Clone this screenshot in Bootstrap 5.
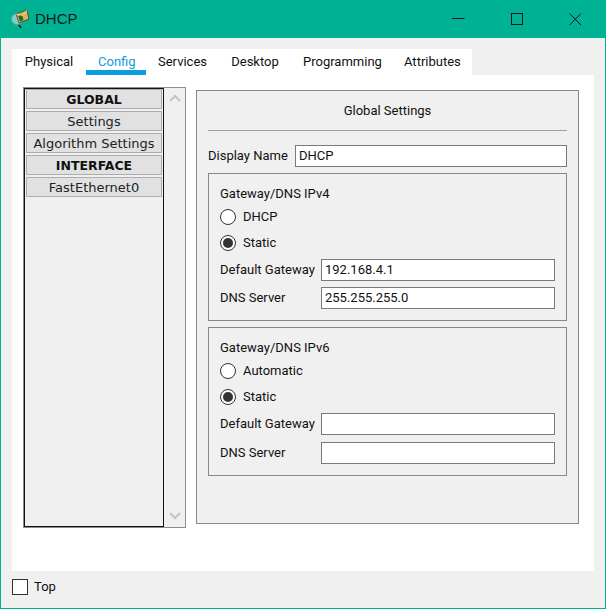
<!DOCTYPE html>
<html>
<head>
  <meta charset="utf-8"/>
  <title>DHCP</title>
  <link rel="stylesheet" href="https://cdn.jsdelivr.net/npm/bootstrap@5.3.2/dist/css/bootstrap.min.css">
  <style>
    html, body { height: 609px; overflow: hidden; }
    body { background: #fff; font-family: Roboto, "Liberation Sans", Arial, sans-serif; font-size: 13px; color: #111; }
    .pt-window { width: 606px; height: 609px; background: #f0f0f0; border: 1px solid #00b294; border-top: 0; }
    .pt-title { height: 38px; margin: 0 -1px; background: #00b294; padding-left: 10px; color: #0c1c1a; }
    .pt-title-text { font-family: "Liberation Sans", Arial, sans-serif; font-size: 15px; margin-left: 5px; }
    .pt-winbtns { width: 177px; height: 38px; padding-right: 1px; }
    .pt-winbtns span { width: 59px; text-align: center; line-height: 0; }
    .pt-main { padding: 11px 11px 0; }
    .pt-tabs { width: 460px; height: 26px; background: #fff; padding-left: 12px; }
    .pt-tab { position: relative; flex: none; margin-right: 24px; line-height: 26px; text-align: center; white-space: nowrap; }
    .pt-tab:nth-child(1) { width: 50px; }
    .pt-tab:nth-child(2) { width: 36px; }
    .pt-tab:nth-child(3) { width: 49px; }
    .pt-tab:nth-child(4) { width: 48px; }
    .pt-tab:nth-child(5) { width: 77px; }
    .pt-tab:nth-child(6) { width: 56px; margin-right: 0; }
    .pt-tab.on { color: #0f9bd8; }
    .pt-tab.on::after { content: ""; position: absolute; left: -12px; right: -12px; bottom: 0; height: 5px; background: #0a9fdc; }
    .pt-content { width: 582px; height: 496px; background: #fff; padding: 12px 11px 0; }
    .pt-side { width: 163px; height: 441px; border: 1px solid #8a8d91; background: #f0f0f0; }
    .pt-list { width: 140px; height: 439px; border: 1px solid #111; padding: 0 1px; background: #f0f0f0; }
    .pt-item { height: 20px; margin: 0 0 2px 0; background: #e1e1e1; border: 1px solid #adadad; font-family: "DejaVu Sans", Verdana, sans-serif; font-size: 13px; line-height: 20px; text-align: center; color: #222; white-space: nowrap; overflow: hidden; }
    .pt-item.head { font-weight: 700; color: #111; font-size: 12.5px; }
    .pt-scroll { width: 21px; padding: 6px 0 7px; }
    .pt-panel { width: 383px; height: 434px; margin: 3px 0 0 10px; background: #f0f0f0; border: 1px solid #85888c; padding: 0 11px; }
    .pt-heading { height: 40px; border-bottom: 1px solid #a0a0a0; padding-top: 12px; text-align: center; margin-bottom: 14px; line-height: 16px; }
    .pt-field { height: 22px; border: 1px solid #7a7a7a; background: #fff; padding: 0 3px; line-height: 20px; color: #111; }
    .pt-label { line-height: 22px; white-space: nowrap; }
    .pt-label-wide { width: 87px; }
    .pt-group { border: 1px solid #85888c; padding: 0 11px; margin-top: 6px; }
    .pt-group.v4 { height: 148px; }
    .pt-group.v6 { height: 149px; }
    .pt-group-title { margin-top: 11px; line-height: 17px; margin-bottom: 2px; }
    .pt-radio { width: 16px; height: 16px; border-radius: 50%; border: 1px solid #333; background: #fff; margin-right: 7px; flex: none; position: relative; }
    .pt-radio.on::after { content: ""; position: absolute; left: 2px; top: 2px; width: 10px; height: 10px; border-radius: 50%; background: #333; }
    .pt-radio-row { height: 26px; }
    .pt-row { margin-top: 6px; }
    .pt-radio-row + .pt-row { margin-top: 3px; }
    .v6 .pt-row:last-child { margin-top: 7px; }
    .pt-row .pt-label { width: 101px; }
    .pt-row .pt-field { width: 234px; }
    .pt-foot { padding-top: 8px; line-height: 16px; }
    .pt-check { width: 16px; height: 16px; border: 1px solid #333; background: #fff; margin-right: 6px; }
  </style>
</head>
<body>
<div class="pt-window">
  <div class="pt-title d-flex align-items-center justify-content-between">
    <div class="d-flex align-items-center">
      <svg width="20" height="20" viewBox="0 0 20 20">
        <path d="M7 13 L11 19" stroke="#222" stroke-width="1.6"/>
        <circle cx="7" cy="10" r="5.5" fill="#7fd0c4" stroke="#5da89e"/>
        <path d="M6 5 L17 1 L19 10 L9 14 Z" fill="#d9b45a" stroke="#4a3a12" stroke-width="0.8"/>
        <path d="M8 7 L12 5.5 L13.5 11 L10 12.5 Z" fill="#1d6b35"/>
        <path d="M6 5 L13 6.5 L17 1" fill="none" stroke="#f3e3a8" stroke-width="0.8"/>
      </svg>
      <span class="pt-title-text">DHCP</span>
    </div>
    <div class="pt-winbtns d-flex align-items-center">
      <span><svg width="13" height="13" viewBox="0 0 13 13"><path d="M0 5.5H12.5" stroke="#111" stroke-width="1"/></svg></span>
      <span><svg width="13" height="13" viewBox="0 0 13 13"><rect x="0.5" y="0.5" width="11" height="11" fill="none" stroke="#111"/></svg></span>
      <span><svg width="13" height="13" viewBox="0 0 13 13"><path d="M0.5 0.5L12 12M12 0.5L0.5 12" stroke="#111" stroke-width="1"/></svg></span>
    </div>
  </div>
  <div class="pt-main">
    <div class="pt-tabs d-flex">
      <span class="pt-tab">Physical</span>
      <span class="pt-tab on">Config</span>
      <span class="pt-tab">Services</span>
      <span class="pt-tab">Desktop</span>
      <span class="pt-tab">Programming</span>
      <span class="pt-tab">Attributes</span>
    </div>
    <div class="pt-content d-flex align-items-start">
      <div class="pt-side d-flex">
        <div class="pt-list">
          <div class="pt-item head">GLOBAL</div>
          <div class="pt-item">Settings</div>
          <div class="pt-item">Algorithm Settings</div>
          <div class="pt-item head">INTERFACE</div>
          <div class="pt-item">FastEthernet0</div>
        </div>
        <div class="pt-scroll d-flex flex-column justify-content-between align-items-center">
          <svg width="12" height="8" viewBox="0 0 12 8"><path d="M1 7L6 2L11 7" fill="none" stroke="#c4c4c4" stroke-width="2"/></svg>
          <svg width="12" height="8" viewBox="0 0 12 8"><path d="M1 1L6 6L11 1" fill="none" stroke="#c4c4c4" stroke-width="2"/></svg>
        </div>
      </div>
      <div class="pt-panel">
        <div class="pt-heading">Global Settings</div>
        <div class="d-flex">
          <span class="pt-label pt-label-wide">Display Name</span>
          <div class="pt-field flex-grow-1">DHCP</div>
        </div>
        <div class="pt-group v4">
          <div class="pt-group-title">Gateway/DNS IPv4</div>
          <div class="pt-radio-row d-flex align-items-center"><span class="pt-radio"></span>DHCP</div>
          <div class="pt-radio-row d-flex align-items-center"><span class="pt-radio on"></span>Static</div>
          <div class="pt-row d-flex"><span class="pt-label">Default Gateway</span><div class="pt-field">192.168.4.1</div></div>
          <div class="pt-row d-flex"><span class="pt-label">DNS Server</span><div class="pt-field">255.255.255.0</div></div>
        </div>
        <div class="pt-group v6">
          <div class="pt-group-title">Gateway/DNS IPv6</div>
          <div class="pt-radio-row d-flex align-items-center"><span class="pt-radio"></span>Automatic</div>
          <div class="pt-radio-row d-flex align-items-center"><span class="pt-radio on"></span>Static</div>
          <div class="pt-row d-flex"><span class="pt-label">Default Gateway</span><div class="pt-field"></div></div>
          <div class="pt-row d-flex"><span class="pt-label">DNS Server</span><div class="pt-field"></div></div>
        </div>
      </div>
    </div>
    <div class="pt-foot d-flex align-items-start">
      <span class="pt-check"></span>Top
    </div>
  </div>
</div>
<script src="https://cdn.jsdelivr.net/npm/bootstrap@5.3.2/dist/js/bootstrap.bundle.min.js"></script>
</body>
</html>
